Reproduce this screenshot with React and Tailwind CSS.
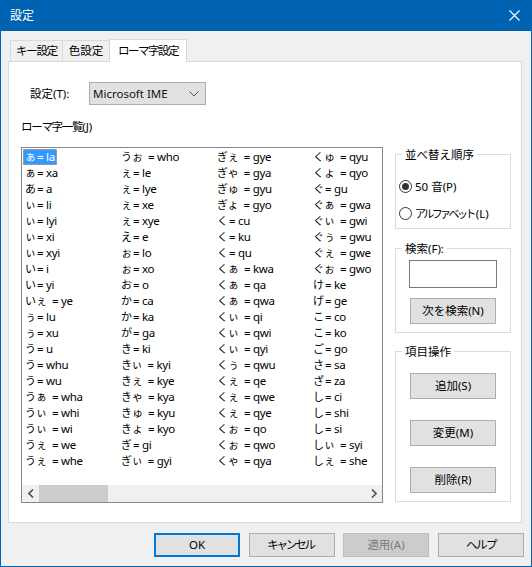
const cols = [
  [["ぁ","la"],["ぁ","xa"],["あ","a"],["ぃ","li"],["ぃ","lyi"],["ぃ","xi"],["ぃ","xyi"],["い","i"],["い","yi"],["いぇ","ye"],["ぅ","lu"],["ぅ","xu"],["う","u"],["う","whu"],["う","wu"],["うぁ","wha"],["うぃ","whi"],["うぃ","wi"],["うぇ","we"],["うぇ","whe"]],
  [["うぉ","who"],["ぇ","le"],["ぇ","lye"],["ぇ","xe"],["ぇ","xye"],["え","e"],["ぉ","lo"],["ぉ","xo"],["お","o"],["か","ca"],["か","ka"],["が","ga"],["き","ki"],["きぃ","kyi"],["きぇ","kye"],["きゃ","kya"],["きゅ","kyu"],["きょ","kyo"],["ぎ","gi"],["ぎぃ","gyi"]],
  [["ぎぇ","gye"],["ぎゃ","gya"],["ぎゅ","gyu"],["ぎょ","gyo"],["く","cu"],["く","ku"],["く","qu"],["くぁ","kwa"],["くぁ","qa"],["くぁ","qwa"],["くぃ","qi"],["くぃ","qwi"],["くぃ","qyi"],["くぅ","qwu"],["くぇ","qe"],["くぇ","qwe"],["くぇ","qye"],["くぉ","qo"],["くぉ","qwo"],["くゃ","qya"]],
  [["くゅ","qyu"],["くょ","qyo"],["ぐ","gu"],["ぐぁ","gwa"],["ぐぃ","gwi"],["ぐぅ","gwu"],["ぐぇ","gwe"],["ぐぉ","gwo"],["け","ke"],["げ","ge"],["こ","co"],["こ","ko"],["ご","go"],["さ","sa"],["ざ","za"],["し","ci"],["し","shi"],["し","si"],["しぃ","syi"],["しぇ","she"]],
];

function Row({ kana, roma, selected }) {
  const two = kana.length > 1;
  return (
    <div className="h-4 flex items-center">
      <span className={selected
        ? "h-4 flex items-center px-[2px] bg-[#3399ff] text-white outline-1 -outline-offset-1 outline-dotted outline-[#e8a050] whitespace-pre"
        : "h-4 flex items-center px-[2px] whitespace-pre"}>
        <span className="text-[11px] leading-4">{kana}</span>
        <span className={two ? "ml-[5px] tracking-[-0.3px]" : "ml-[1px] tracking-[-0.3px]"}>{"= " + roma}</span>
      </span>
    </div>
  );
}

function Btn({ children, className = "" }) {
  return (
    <button className={"w-[86px] h-[26px] bg-[#e1e1e1] border border-[#adadad] flex items-center justify-center text-black " + className}>
      {children}
    </button>
  );
}

function Group({ title, className = "", children }) {
  return (
    <div className={"relative border border-[#dcdcdc] " + className}>
      <span className="absolute -top-[8px] left-[6px] bg-white px-[3px] leading-[16px] whitespace-nowrap">{title}</span>
      {children}
    </div>
  );
}

export default function App() {
  return (
    <div className="w-[532px] h-[567px] flex flex-col bg-[#f0f0f0] border-x border-b border-[#0063b1] text-[11.5px] text-black font-['Noto_Sans','Noto_Sans_CJK_JP',sans-serif] overflow-hidden">
      <div className="h-[31px] shrink-0 bg-[#0063b1] flex items-center justify-between pl-[9px] pr-[11px] text-white text-[12px]">
        <span>設定</span>
        <svg width="11" height="11" viewBox="0 0 11 11" stroke="white" strokeWidth="1.1"><path d="M0.5 0.5L10.5 10.5M10.5 0.5L0.5 10.5" /></svg>
      </div>

      <div className="flex items-end h-[30px] shrink-0 pl-[9px] relative z-10">
        <div className="h-[21px] w-[53px] flex items-center justify-center bg-[#f0f0f0] border border-b-0 border-[#d9d9d9] tracking-[-1.3px]">キー設定</div>
        <div className="h-[21px] w-[48px] -ml-[1px] flex items-center justify-center bg-[#f0f0f0] border border-b-0 border-[#d9d9d9]">色設定</div>
        <div className="h-[23px] w-[78px] -ml-[1px] -mb-[1px] flex items-center justify-center bg-white border border-b-0 border-[#d9d9d9] tracking-[-1.5px]">ローマ字設定</div>
      </div>

      <div className="ml-[7px] mr-[9px] h-[462px] shrink-0 bg-white border border-[#d9d9d9] pl-[12px] pr-[10px] flex flex-col">
        <div className="flex items-center mt-[20px] h-[23px]">
          <span className="ml-[9px] w-[59px]">設定(T):</span>
          <div className="w-[117px] h-[23px] bg-[#e1e1e1] border border-[#adadad] flex items-center justify-between pl-[3px] pr-[6px] text-[#111]">
            <span>Microsoft IME</span>
            <svg width="10" height="6" viewBox="0 0 10 6" fill="none" stroke="#555" strokeWidth="1"><path d="M0.5 0.5L5 5L9.5 0.5" /></svg>
          </div>
        </div>

        <div className="mt-[14px] h-[16px] leading-[16px] tracking-[-1.3px]">ローマ字一覧<span className="tracking-normal">(J)</span></div>

        <div className="flex mt-[12px] justify-between">
          <div className="w-[362px] h-[356px] border border-[#828790] flex flex-col overflow-hidden">
            <div className="flex flex-1 pt-[1px] pl-[1px] overflow-hidden">
              {cols.map((c, i) => (
                <div key={i} className="w-[96px] shrink-0">
                  {c.map((r, j) => <Row key={j} kana={r[0]} roma={r[1]} selected={i === 0 && j === 0} />)}
                </div>
              ))}
            </div>
            <div className="h-[17px] shrink-0 bg-[#f0f0f0] flex items-center">
              <div className="w-[17px] h-full flex items-center justify-center">
                <svg width="6" height="9" viewBox="0 0 6 9" fill="none" stroke="#505050" strokeWidth="1.6"><path d="M5 0.5L1 4.5L5 8.5" /></svg>
              </div>
              <div className="w-[69px] h-full bg-[#cdcdcd]" />
              <div className="flex-1" />
              <div className="w-[17px] h-full flex items-center justify-center">
                <svg width="6" height="9" viewBox="0 0 6 9" fill="none" stroke="#505050" strokeWidth="1.6"><path d="M1 0.5L5 4.5L1 8.5" /></svg>
              </div>
            </div>
          </div>

          <div className="w-[116px] flex flex-col">
            <Group title="並べ替え順序" className="mt-[7px] h-[75px] pt-[18px] pl-[3px]">
              <div className="flex items-center h-[27px]">
                <span className="w-[13px] h-[13px] rounded-full border border-[#333] flex items-center justify-center">
                  <span className="w-[7px] h-[7px] rounded-full bg-[#333]" />
                </span>
                <span className="ml-[3px]">50 音(P)</span>
              </div>
              <div className="flex items-center h-[27px]">
                <span className="w-[13px] h-[13px] rounded-full border border-[#333]" />
                <span className="ml-[3px] whitespace-nowrap text-[11px] tracking-[-2.6px]">アルファベット<span className="ml-[2px] text-[11.5px] tracking-normal">(L)</span></span>
              </div>
            </Group>

            <Group title="検索(F):" className="mt-[19px] h-[85px] pl-[13px] pt-[11px]">
              <div className="w-[88px] h-[28px] border border-[#7a7a7a] bg-white" />
              <Btn className="mt-[10px] ml-[1px]">次を検索(N)</Btn>
            </Group>

            <Group title="項目操作" className="mt-[18px] h-[151px] pl-[14px] pt-[21px]">
              <Btn>追加(S)</Btn>
              <Btn className="mt-[21px]">変更(M)</Btn>
              <Btn className="mt-[21px]">削除(R)</Btn>
            </Group>
          </div>
        </div>
      </div>

      <div className="flex justify-end gap-[9px] mt-[10px] pr-[7px]">
        <button className="w-[86px] h-[24px] bg-[#e1e1e1] border-2 border-[#0078d7] flex items-center justify-center">OK</button>
        <button className="w-[86px] h-[24px] bg-[#e1e1e1] border border-[#adadad] flex items-center justify-center tracking-[-2.2px] pr-[3px]">キャンセル</button>
        <button className="w-[86px] h-[24px] -ml-[1px] bg-[#cccccc] border border-[#bfbfbf] flex items-center justify-center text-[#7a7a7a]">適用(A)</button>
        <button className="w-[86px] h-[24px] bg-[#e1e1e1] border border-[#adadad] flex items-center justify-center tracking-[-1.5px]">ヘルプ</button>
      </div>
    </div>
  );
}
